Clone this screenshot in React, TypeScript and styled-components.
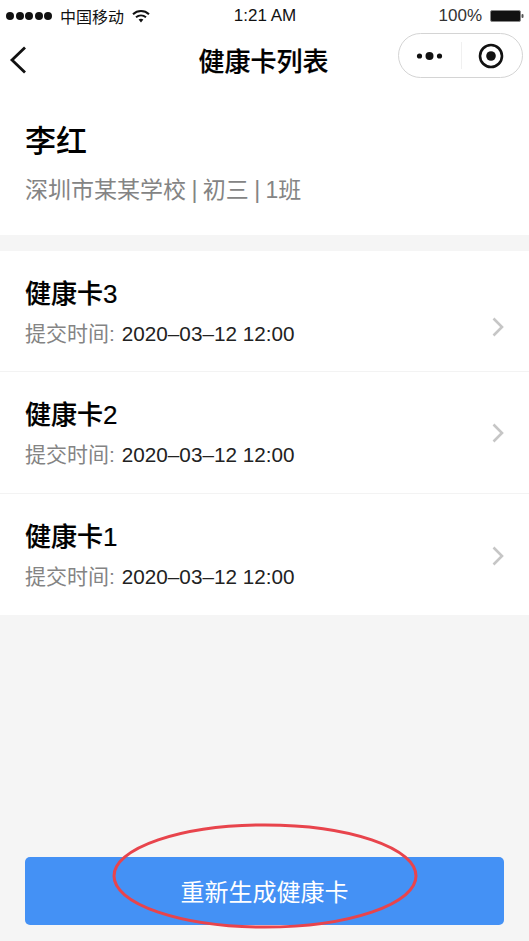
import * as React from 'react';
import styled, {createGlobalStyle} from 'styled-components';

const GlobalStyle = createGlobalStyle`
	html, body {
		margin: 0;
		padding: 0;
		background: #f5f5f5;
	}
	body {
		font-family: "Liberation Sans", "Noto Sans CJK SC", sans-serif;
		color: #000;
	}
`;

const Page = styled.div`
	width: 529px;
	height: 941px;
	display: flex;
	flex-direction: column;
	background: #f5f5f5;
	overflow: hidden;
`;

const Head = styled.div`
	background: #fff;
`;

const StatusBar = styled.div`
	height: 31px;
	display: grid;
	grid-template-columns: 1fr auto 1fr;
	align-items: center;
	padding: 0 5px 0 6px;
	color: #111;
`;

const Carrier = styled.div`
	display: flex;
	align-items: center;
	gap: 8px;
	font-size: 16px;
`;

const Dots = styled.div`
	display: flex;
	gap: 1.5px;
`;

const Dot = styled.span`
	width: 8px;
	height: 8px;
	border-radius: 50%;
	background: #111;
`;

const Clock = styled.div`
	font-size: 17px;
	text-align: center;
`;

const Battery = styled.div`
	display: flex;
	align-items: center;
	justify-content: flex-end;
	gap: 8px;
	color: #333;
	font-size: 17px;
`;

const NavBar = styled.div`
	height: 58px;
	display: grid;
	grid-template-columns: 1fr auto 1fr;
	align-items: center;
	padding: 0 6px 0 9px;
`;

const NavTitle = styled.div`
	font-size: 26px;
	font-weight: 500;
	margin: -2px 5px 0 0;
	-webkit-text-stroke: 0.2px #000;
`;

const Capsule = styled.div`
	width: 125px;
	height: 45px;
	box-sizing: border-box;
	border: 1px solid #d4d4d4;
	border-radius: 23px;
	display: grid;
	grid-template-columns: 1fr 1fr;
	align-items: center;
	justify-items: center;
`;

const CapsuleDivider = styled.div`
	position: absolute;
	left: 50%;
	top: 9px;
	width: 1px;
	height: 27px;
	background: #f0f0f0;
`;

const CapsuleWrap = styled.div`
	position: relative;
	justify-self: end;
	margin-top: -9px;
`;

const Profile = styled.div`
	background: #fff;
	height: 146px;
	padding: 33px 25px 0;
	box-sizing: border-box;
`;

const Name = styled.div`
	font-size: 31px;
	line-height: 40px;
	font-weight: 500;
`;

const SchoolLine = styled.div`
	margin-top: 13px;
	font-size: 23px;
	line-height: 30px;
	color: #848484;
	word-spacing: -1px;
`;

const List = styled.div`
	margin-top: 16px;
	background: #fff;
`;

const Row = styled.div<{$last?: boolean}>`
	height: 121.3px;
	box-sizing: border-box;
	padding: 0 25px;
	display: flex;
	align-items: center;
	justify-content: space-between;
	border-bottom: ${p => (p.$last ? 'none' : '1px solid #f3f3f3')};
`;

const RowText = styled.div`
	padding-top: 2px;
`;

const RowTitle = styled.div`
	font-size: 26px;
	line-height: 34px;
	font-weight: 500;
	-webkit-text-stroke: 0.2px #000;
`;

const RowMeta = styled.div`
	margin-top: 9px;
	font-size: 21px;
	line-height: 28px;
	color: #848484;
	display: flex;
`;

const RowTime = styled.span`
	color: #222;
	margin-left: 7px;
	font-size: 20.7px;
`;

const Chevron = styled.svg<{$drop: number}>`
	margin-top: ${p => p.$drop}px;
`;

const Spacer = styled.div`
	flex: 1;
`;

const Footer = styled.div`
	padding: 0 25px 16px;
	position: relative;
`;

const Button = styled.div`
	height: 68px;
	padding-bottom: 2px;
	border-radius: 5px;
	background: #4491f5;
	color: #fff;
	font-size: 24px;
	display: flex;
	align-items: center;
	justify-content: center;
	box-sizing: border-box;
`;

const Annotation = styled.svg`
	position: absolute;
	left: 112px;
	top: -34px;
	pointer-events: none;
`;

const rows = [
	{title: '健康卡3', drop: 31},
	{title: '健康卡2', drop: 2},
	{title: '健康卡1', drop: 4},
];

export default function App() {
	return <Page>
		<GlobalStyle/>
		<Head>
			<StatusBar>
				<Carrier>
					<Dots>{[0, 1, 2, 3, 4].map(i => <Dot key={i}/>)}</Dots>
					<span>中国移动</span>
					<svg width="18" height="14" viewBox="0 0 18 14">
						<path d="M1 5.2C5.6 1 12.4 1 17 5.2" fill="none" stroke="#111" strokeWidth="2"/>
						<path d="M4 8.2C6.9 5.8 11.1 5.8 14 8.2" fill="none" stroke="#111" strokeWidth="2"/>
						<path d="M6.6 10.6 9 13.4l2.4-2.8C10 9.4 8 9.4 6.6 10.6z" fill="#111"/>
					</svg>
				</Carrier>
				<Clock>1:21 AM</Clock>
				<Battery>
					<span>100%</span>
					<svg width="34" height="14" viewBox="0 0 34 14">
						<rect x="0.5" y="1.5" width="30" height="11" rx="1.5" fill="#111" stroke="#888"/>
						<rect x="31.5" y="5" width="2" height="4" rx="1" fill="#555"/>
					</svg>
				</Battery>
			</StatusBar>
			<NavBar>
				<svg width="20" height="30" viewBox="0 0 20 30">
					<path d="M16 2.5 3 15l13 12.5" fill="none" stroke="#111" strokeWidth="2.8"/>
				</svg>
				<NavTitle>健康卡列表</NavTitle>
				<CapsuleWrap>
					<Capsule>
						<svg width="28" height="12" viewBox="0 0 28 12">
							<circle cx="3.5" cy="6" r="2.6" fill="#111"/>
							<circle cx="13.5" cy="6" r="4" fill="#111"/>
							<circle cx="23.5" cy="6" r="2.6" fill="#111"/>
						</svg>
						<svg width="26" height="26" viewBox="0 0 26 26">
							<circle cx="13" cy="13" r="11" fill="none" stroke="#111" strokeWidth="2.6"/>
							<circle cx="13" cy="13" r="4.8" fill="#111"/>
						</svg>
					</Capsule>
					<CapsuleDivider/>
				</CapsuleWrap>
			</NavBar>
		</Head>
		<Profile>
			<Name>李红</Name>
			<SchoolLine>深圳市某某学校 | 初三 | 1班</SchoolLine>
		</Profile>
		<List>
			{rows.map((row, i) => <Row key={row.title} $last={i === rows.length - 1}>
				<RowText>
					<RowTitle>{row.title}</RowTitle>
					<RowMeta>提交时间:<RowTime>2020–03–12 12:00</RowTime></RowMeta>
				</RowText>
				<Chevron $drop={row.drop} width="12" height="20" viewBox="0 0 12 20">
					<path d="M1.5 1.5 10 10l-8.5 8.5" fill="none" stroke="#c6c6c6" strokeWidth="2.6"/>
				</Chevron>
			</Row>)}
		</List>
		<Spacer/>
		<Footer>
			<Button>重新生成健康卡</Button>
			<Annotation width="306" height="106" viewBox="0 0 306 106">
				<ellipse cx="153" cy="53" rx="151" ry="51" fill="none" stroke="#e8444c" strokeWidth="3"/>
			</Annotation>
		</Footer>
	</Page>;
}
